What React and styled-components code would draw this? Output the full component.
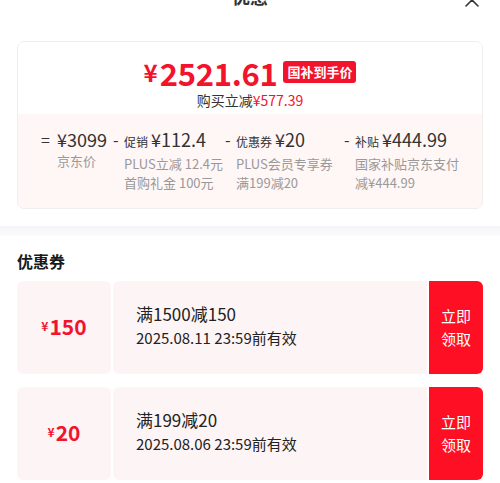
import styled, { createGlobalStyle } from 'styled-components'

const GlobalStyle = createGlobalStyle`
  html, body {
    margin: 0;
    padding: 0;
    background: #fff;
    overflow: hidden;
  }
  body {
    font-family: "Noto Sans CJK SC", "Noto Sans", sans-serif;
    color: #1a1a1a;
  }
`

const red = '#f2132d'

const Page = styled.div`
  width: 500px;
  height: 483px;
  overflow: hidden;
`

const Header = styled.div`
  height: 41px;
  display: grid;
  grid-template-columns: 1fr auto 1fr;
  align-items: start;
`

const Title = styled.div`
  grid-column: 2;
  margin-top: -14px;
  font-size: 18px;
  line-height: 20px;
  font-weight: 700;
  color: #333;
`

const Close = styled.div`
  grid-column: 3;
  justify-self: end;
  margin: -11px 20px 0 0;
  color: #333;
`

const Summary = styled.div`
  margin: 0 17px;
  border: 1px solid #f2eded;
  border-radius: 7px;
  overflow: hidden;
`

const Top = styled.div`
  padding: 12px 0 4px;
  display: flex;
  flex-direction: column;
  align-items: center;
  background: #fff;
`

const PriceLine = styled.div`
  display: flex;
  align-items: center;
  height: 36px;
  color: ${red};
  font-weight: 700;
  line-height: 1;
`

const Yen = styled.span`
  font-size: ${p => p.$size}px;
  margin-right: ${p => p.$gap || 0}px;
`

const BigNum = styled.span`
  font-size: 31px;
  letter-spacing: -0.3px;
`

const Tag = styled.span`
  margin-left: 6px;
  background: ${red};
  color: #fff;
  font-size: 13px;
  line-height: 22px;
  padding: 0 4px;
  border-radius: 3px;
  font-weight: 700;
`

const Saved = styled.div`
  font-size: 14px;
  line-height: 20px;
  color: #333;
  b {
    font-weight: 400;
    color: ${red};
  }
`

const Breakdown = styled.div`
  background: #fff6f6;
  padding: 13px 0 16px 23px;
  display: grid;
  grid-template-columns: 72px 112px 119px auto;
`

const Part = styled.div`
  display: flex;
  align-items: flex-start;
`

const Op = styled.span`
  font-size: 16px;
  line-height: 24px;
  color: #333;
  width: ${p => p.$w}px;
  flex: none;
`

const PartBody = styled.div`
  display: flex;
  flex-direction: column;
`

const Value = styled.div`
  line-height: 24px;
  white-space: nowrap;
  color: #333;
  font-size: 18px;
  small {
    font-size: 12px;
    margin-right: 3px;
  }
`

const Note = styled.div`
  font-size: 13px;
  line-height: 19px;
  color: #999;
  white-space: nowrap;
`

const Band = styled.div`
  height: 10px;
  margin-top: 17px;
  background: linear-gradient(#f4f5f8, #fbfbfc);
`

const Section = styled.div`
  padding: 13px 17px 0;
`

const Heading = styled.div`
  font-size: 16px;
  line-height: 24px;
  font-weight: 700;
  color: #1a1a1a;
  margin-bottom: 8px;
`

const CouponList = styled.div`
  display: flex;
  flex-direction: column;
  gap: 13px;
`

const Coupon = styled.div`
  display: flex;
  height: 93px;
  gap: 2px;
`

const Amount = styled.div`
  width: 94px;
  flex: none;
  background: #fdf4f5;
  border-radius: 6px;
  display: flex;
  align-items: center;
  justify-content: center;
  color: ${red};
  font-weight: 600;
  font-size: 21px;
  padding-bottom: 4px;
  small {
    font-size: 12px;
    margin-right: 1px;
  }
`

const Info = styled.div`
  flex: 1;
  background: #fdf4f5;
  border-radius: 6px 0 0 6px;
  padding: 0 0 4px 23px;
  display: flex;
  flex-direction: column;
  justify-content: center;
  color: #222;
`

const Rule = styled.div`
  font-size: 17px;
  line-height: 24px;
`

const Expire = styled.div`
  font-size: 15px;
  line-height: 24px;
`

const Claim = styled.button`
  width: 54px;
  flex: none;
  border: none;
  background: #ff0f23;
  color: #fff;
  border-radius: 0 6px 6px 0;
  font-family: inherit;
  font-size: 15px;
  line-height: 23px;
  padding: 0 0 2px;
  cursor: pointer;
`

const parts = [
  { op: '=', w: 16, value: '¥3099', notes: ['京东价'] },
  { op: '-', w: 11, label: '促销', value: '¥112.4', notes: ['PLUS立减 12.4元', '首购礼金 100元'] },
  { op: '-', w: 11, label: '优惠券', value: '¥20', notes: ['PLUS会员专享券', '满199减20'] },
  { op: '-', w: 11, label: '补贴', value: '¥444.99', notes: ['国家补贴京东支付', '减¥444.99'] },
]

const coupons = [
  { amount: '150', rule: '满1500减150', expire: '2025.08.11 23:59前有效' },
  { amount: '20', rule: '满199减20', expire: '2025.08.06 23:59前有效' },
]

export default function App() {
  return (
    <Page>
      <GlobalStyle />
      <Header>
        <Title>优惠</Title>
        <Close>
          <svg width="16" height="16" viewBox="0 0 16 16" fill="none" stroke="currentColor" strokeWidth="1.6" strokeLinecap="round">
            <path d="M2 2l12 12M14 2L2 14" />
          </svg>
        </Close>
      </Header>

      <Summary>
        <Top>
          <PriceLine>
            <Yen $size={24} $gap={2}>¥</Yen>
            <BigNum>2521.61</BigNum>
            <Tag>国补到手价</Tag>
          </PriceLine>
          <Saved>购买立减<b>¥577.39</b></Saved>
        </Top>
        <Breakdown>
          {parts.map(p => (
            <Part key={p.value}>
              <Op $w={p.w}>{p.op}</Op>
              <PartBody>
                <Value>
                  {p.label && <small>{p.label}</small>}
                  {p.value}
                </Value>
                {p.notes.map(n => <Note key={n}>{n}</Note>)}
              </PartBody>
            </Part>
          ))}
        </Breakdown>
      </Summary>

      <Band />

      <Section>
        <Heading>优惠券</Heading>
        <CouponList>
          {coupons.map(c => (
            <Coupon key={c.amount}>
              <Amount><small>¥</small>{c.amount}</Amount>
              <Info>
                <Rule>{c.rule}</Rule>
                <Expire>{c.expire}</Expire>
              </Info>
              <Claim>立即<br />领取</Claim>
            </Coupon>
          ))}
        </CouponList>
      </Section>
    </Page>
  )
}
